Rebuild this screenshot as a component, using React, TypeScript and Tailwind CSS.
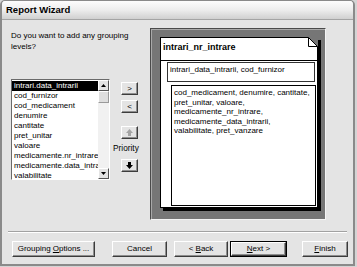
import type { ReactNode } from 'react'

const fields = [
  'intrari.data_intrarii',
  'cod_furnizor',
  'cod_medicament',
  'denumire',
  'cantitate',
  'pret_unitar',
  'valoare',
  'medicamente.nr_intrare',
  'medicamente.data_intrarii',
  'valabilitate',
]

const detailLines = [
  'cod_medicament, denumire, cantitate,',
  'pret_unitar, valoare,',
  'medicamente_nr_intrare,',
  'medicamente_data_intrarii,',
  'valabilitate, pret_vanzare',
]

function Button({ children, className = '' }: { children: ReactNode; className?: string }) {
  return (
    <div
      className={`flex shrink-0 items-center justify-center border border-t-white border-l-white border-r-[#3c3c3c] border-b-[#3c3c3c] bg-[#e4e4e4] shadow-[inset_-1px_-1px_0_#8e8e8e] ${className}`}
    >
      <span className="whitespace-pre">{children}</span>
    </div>
  )
}

function Arrow({ down = false, color = '#000' }: { down?: boolean; color?: string }) {
  return (
    <svg width="7" height="7" viewBox="0 0 7 7">
      {down ? (
        <path d="M2 0h3v3h2L3.5 7 0 3h2z" fill={color} />
      ) : (
        <path d="M2 7h3V4h2L3.5 0 0 4h2z" fill={color} />
      )}
    </svg>
  )
}

function ScrollArrow({ down = false }: { down?: boolean }) {
  return (
    <div className="flex h-[11px] w-[11px] items-center justify-center border border-t-white border-l-white border-r-[#555] border-b-[#555] bg-[#e4e4e4]">
      <svg width="5" height="3" viewBox="0 0 5 3">
        <path d={down ? 'M0 0h5L2.5 3z' : 'M0 3h5L2.5 0z'} fill="#000" />
      </svg>
    </div>
  )
}

function FieldList() {
  return (
    <div className="flex h-[101px] w-[99px] shrink-0 border border-t-[#6a6a6a] border-l-[#6a6a6a] border-r-white border-b-white bg-white">
      <ul className="min-w-0 flex-1 overflow-hidden pt-[1px]">
        {fields.map((field, i) => (
          <li
            key={field}
            className={`h-[10px] overflow-hidden whitespace-nowrap pl-[2px] leading-[10px] ${
              i === 0 ? 'bg-black text-white' : ''
            }`}
          >
            {field}
          </li>
        ))}
      </ul>

      <div className="flex w-[11px] shrink-0 flex-col bg-[#f1f1f1]">
        <ScrollArrow />
        <div className="h-[12px] border border-t-white border-l-white border-r-[#9a9a9a] border-b-[#9a9a9a] bg-[#dedede]" />
        <div className="flex-1" />
        <ScrollArrow down />
      </div>
    </div>
  )
}

function MoveButtons() {
  return (
    <div className="ml-[11px] flex w-[17px] flex-col pt-[3px]">
      <Button className="h-[13px] w-[17px]">&gt;</Button>
      <Button className="mt-[5px] h-[13px] w-[17px]">&lt;</Button>
      <Button className="mt-[13px] h-[13px] w-[17px]">
        <Arrow color="#a4a4a4" />
      </Button>
      <span className="-ml-[8px] mt-[4px] h-[12px] whitespace-nowrap text-[8.3px]">Priority</span>
      <Button className="mt-[4px] h-[13px] w-[17px]">
        <Arrow down />
      </Button>
    </div>
  )
}

function Preview() {
  return (
    <div className="ml-[12px] mt-[8px] h-[192px] w-[176px] shrink-0 border border-t-[#4a4a4a] border-l-[#4a4a4a] border-r-[#f4f4f4] border-b-[#f4f4f4] bg-[#767676] pl-[9px] pt-[8px] shadow-[inset_1px_1px_0_#a9a9a9]">
      <div className="relative h-[171px] w-[158px] border border-black bg-white shadow-[3px_3px_0_#000]">
        <div className="h-[23px] border-b border-black px-[2px] pt-[4px] text-[9px] font-bold leading-[10px]">
          intrari_nr_intrare
        </div>

        <div className="ml-[6px] mr-[2px] mt-[1px] h-[20px] whitespace-nowrap border border-[#333] px-[2px] pt-[2px]">
          intrari_data_intrarii, cod_furnizor
        </div>

        <div className="ml-[10px] mr-[1px] mt-[3px] h-[121px] border border-black px-[2px] pt-[2px] leading-[9.5px]">
          {detailLines.map((line) => (
            <div key={line} className="whitespace-nowrap">
              {line}
            </div>
          ))}
        </div>

        <svg className="absolute -right-[1px] -top-[1px]" width="10" height="10" viewBox="0 0 10 10">
          <path d="M0 0h10v10z" fill="#767676" />
          <path d="M0.5 0.5v9h9z" fill="#fff" stroke="#000" />
        </svg>
      </div>
    </div>
  )
}

export default function App() {
  return (
    <div className="h-[267px] w-[357px] overflow-hidden bg-[#d4d4d4] font-['Liberation_Sans',Arial,sans-serif] text-[8px] leading-[10px] text-black">
      <div className="flex h-[266px] w-[355px] flex-col overflow-hidden rounded-t-[5px] border-x-2 border-b-2 border-t border-[#8a8a8a] bg-[#e4e4e4]">
        <div className="flex h-[19px] shrink-0 items-center border-b border-[#a4a4a4] bg-gradient-to-b from-[#fdfdfd] via-[#ededed] to-[#d0d0d0] pl-[4px] text-[9.5px] font-bold">
          Report Wizard
        </div>

        <div className="flex h-[211px] shrink-0 pl-[9px]">
          <div className="flex w-[127px] flex-col pt-[10px]">
            <p className="whitespace-nowrap leading-[11px]">
              Do you want to add any grouping
              <br />
              levels?
            </p>

            <div className="mt-[27px] flex">
              <FieldList />
              <MoveButtons />
            </div>
          </div>

          <Preview />
        </div>

        <div className="mx-[6px] h-[2px] shrink-0 border-t border-b border-t-[#a2a2a2] border-b-white" />

        <div className="mt-[8px] flex pl-[10px]">
          <Button className="h-[16px] w-[83px]">
            Grouping <span className="underline">O</span>ptions ...
          </Button>
          <Button className="ml-[17px] h-[16px] w-[55px]">Cancel</Button>
          <Button className="ml-[7px] h-[16px] w-[54px]">
            &lt; <span className="underline">B</span>ack
          </Button>
          <div className="ml-[2px] border border-black">
            <Button className="h-[14px] w-[55px]">
              <span className="underline">N</span>ext &gt;
            </Button>
          </div>
          <Button className="ml-[15px] h-[16px] w-[46px]">
            <span className="underline">F</span>inish
          </Button>
        </div>
      </div>
    </div>
  )
}
